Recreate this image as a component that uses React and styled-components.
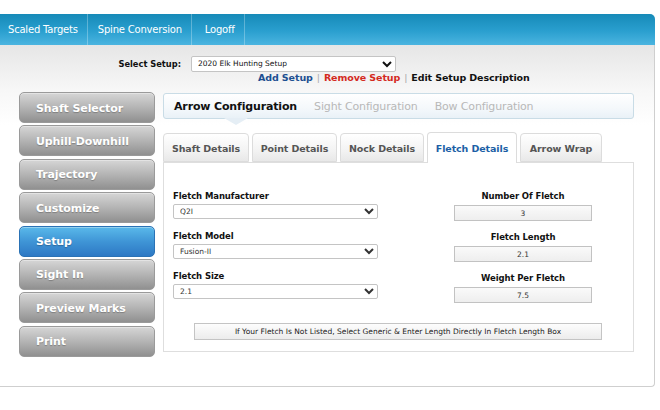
import React from "react";
import styled, { createGlobalStyle } from "styled-components";

const Global = createGlobalStyle`
  html, body { margin: 0; padding: 0; background: #fff; }
  body { font-family: "DejaVu Sans", Verdana, sans-serif; }
  #root { width: 660px; height: 410px; overflow: hidden; }
`;

const Page = styled.div`
  padding-top: 14px;
  width: 655px;
`;

const Header = styled.div`
  height: 31px;
  display: flex;
  align-items: stretch;
  background: linear-gradient(#168ab8, #2a9fcf 55%, #4bb4e0);
  border-top-right-radius: 5px;
`;

const NavItem = styled.div`
  display: flex;
  align-items: center;
  padding: 0 ${p => p.$pr}px 0 ${p => p.$pl}px;
  color: #fff;
  font-size: 10px;
  border-right: 1px solid rgba(255, 255, 255, 0.28);
  letter-spacing: -0.2px;
`;

const Body = styled.div`
  height: 341px;
  background: linear-gradient(#e6e6e6, #f7f7f7 45px, #fff 80px);
  border-right: 1px solid #cfcfcf;
  border-bottom: 1px solid #cfcfcf;
  border-bottom-right-radius: 4px;
  display: flex;
  flex-direction: column;
`;

const SetupRow = styled.div`
  display: flex;
  align-items: center;
  height: 15px;
  margin-top: 11px;
`;

const SetupLabel = styled.div`
  font-size: 8.3px;
  font-weight: bold;
  color: #111;
  padding-right: 10px;
  box-sizing: border-box;
  width: 191px;
  text-align: right;
`;

const SetupSelect = styled.select`
  width: 205px;
  height: 16px;
  font-family: "DejaVu Sans", Verdana, sans-serif;
  font-size: 7.5px;
  color: #111;
  border: 1px solid #c4c4c4;
  border-radius: 2px;
  background: #fff;
  padding: 0 2px;
`;

const LinksRow = styled.div`
  display: flex;
  align-items: center;
  height: 12px;
  padding-left: 258px;
  font-size: 9.5px;
  font-weight: bold;
  letter-spacing: -0.1px;
`;

const Link = styled.span`
  color: ${p => p.$color};
`;

const Pipe = styled.span`
  color: #aaa;
  font-weight: normal;
  margin: 0 4px;
`;

const Main = styled.div`
  display: flex;
  margin-top: 9px;
  padding-left: 19px;
`;

const Sidebar = styled.div`
  width: 136px;
  display: flex;
  flex-direction: column;
  gap: 2.4px;
`;

const SideButton = styled.div`
  height: 31px;
  box-sizing: border-box;
  border-radius: 5px;
  display: flex;
  align-items: center;
  padding: 1px 0 0 16px;
  font-size: 11px;
  font-weight: bold;
  color: #fff;
  text-shadow: 0 1px 1px rgba(0, 0, 0, 0.25);
  letter-spacing: -0.1px;
  background: ${p =>
    p.$active
      ? "linear-gradient(#5ab9ea, #3f95d6 50%, #2d78c4)"
      : "linear-gradient(#d6d6d6, #b4b4b4 50%, #909090)"};
  border: 1px solid ${p => (p.$active ? "#2a72b5" : "#9a9a9a")};
  box-shadow: inset 0 1px 0 rgba(255, 255, 255, 0.35);
`;

const Content = styled.div`
  margin-left: 8px;
  width: 471px;
  display: flex;
  flex-direction: column;
`;

const ConfigBar = styled.div`
  position: relative;
  height: 26px;
  box-sizing: border-box;
  margin-top: 1px;
  border: 1px solid #c9dce6;
  border-radius: 3px;
  background: linear-gradient(#ffffff, #f4f8fb 60%, #e9f1f7);
  display: flex;
  align-items: center;
  padding-left: 10px;
  gap: 17px;
  font-size: 11px;
`;

const ConfigTab = styled.div`
  color: ${p => (p.$active ? "#111" : "#b8b8b8")};
  font-weight: ${p => (p.$active ? "bold" : "normal")};
  letter-spacing: -0.15px;
`;

const Pointer = styled.div`
  position: absolute;
  left: 60px;
  bottom: -7px;
  width: 0;
  height: 0;
  border-left: 12px solid transparent;
  border-right: 12px solid transparent;
  border-top: 7px solid #e5eef5;
`;

const SubTabs = styled.div`
  display: flex;
  align-items: flex-end;
  gap: 3px;
  margin-top: 13px;
  height: 30px;
`;

const SubTab = styled.div`
  width: ${p => p.$w}px;
  height: ${p => (p.$active ? 31 : 29)}px;
  box-sizing: border-box;
  display: flex;
  align-items: center;
  justify-content: center;
  padding-top: ${p => (p.$active ? 0 : 2)}px;
  border: 1px solid #dcdcdc;
  border-bottom: ${p => (p.$active ? "none" : "1px solid #dcdcdc")};
  border-radius: 4px 4px 0 0;
  background: ${p =>
    p.$active ? "#fff" : "linear-gradient(#ffffff, #f3f3f3 60%, #e8e8e8)"};
  color: ${p => (p.$active ? "#1c5fa6" : "#555")};
  font-size: 9.5px;
  font-weight: bold;
  letter-spacing: -0.1px;
  position: relative;
  margin-bottom: ${p => (p.$active ? -1 : 0)}px;
  z-index: 1;
`;

const Panel = styled.div`
  height: 190px;
  box-sizing: border-box;
  border: 1px solid #dedede;
  background: #fff;
  padding: 28px 0 0 9px;
  display: flex;
  flex-direction: column;
`;

const Columns = styled.div`
  display: flex;
`;

const LeftCol = styled.div`
  width: 205px;
  display: flex;
  flex-direction: column;
  gap: 12px;
`;

const RightCol = styled.div`
  margin-left: 76px;
  width: 138px;
  display: flex;
  flex-direction: column;
  gap: 11px;
`;

const Field = styled.div`
  display: flex;
  flex-direction: column;
  gap: ${p => (p.$center ? 3 : 2)}px;
  align-items: ${p => (p.$center ? "center" : "stretch")};
`;

const Label = styled.div`
  font-size: 8.5px;
  font-weight: bold;
  color: #111;
  height: 11px;
  letter-spacing: -0.1px;
`;

const Select = styled.select`
  width: 205px;
  height: 15px;
  font-family: "DejaVu Sans", Verdana, sans-serif;
  font-size: 7.5px;
  color: #333;
  border: 1px solid #c4c4c4;
  border-radius: 2px;
  background: #fff;
  padding: 0 2px;
`;

const ValueBox = styled.input`
  width: 138px;
  height: 16px;
  box-sizing: border-box;
  border: 1px solid #c2c2c2;
  background: linear-gradient(#fafafa, #eeeeee);
  text-align: center;
  font-family: "DejaVu Sans", Verdana, sans-serif;
  font-size: 7.5px;
  color: #333;
  padding: 0;
`;

const NoteButton = styled.div`
  margin: 20px 0 0 21px;
  width: 408px;
  height: 17px;
  box-sizing: border-box;
  border: 1px solid #c4c4c4;
  background: linear-gradient(#fdfdfd, #ececec);
  display: flex;
  align-items: center;
  justify-content: center;
  font-size: 7.5px;
  color: #222;
`;

const navItems = [
  { label: "Scaled Targets", pl: 8, pr: 9 },
  { label: "Spine Conversion", pl: 10, pr: 9 },
  { label: "Logoff", pl: 13, pr: 9 },
];

const sideItems = [
  "Shaft Selector",
  "Uphill-Downhill",
  "Trajectory",
  "Customize",
  "Setup",
  "Sight In",
  "Preview Marks",
  "Print",
];

const subTabs = [
  { label: "Shaft Details", w: 86 },
  { label: "Point Details", w: 85 },
  { label: "Nock Details", w: 84 },
  { label: "Fletch Details", w: 90, active: true },
  { label: "Arrow Wrap", w: 82 },
];

export default function App() {
  return (
    <>
      <Global />
      <Page>
        <Header>
          {navItems.map(n => (
            <NavItem key={n.label} $pl={n.pl} $pr={n.pr}>
              {n.label}
            </NavItem>
          ))}
        </Header>
        <Body>
          <SetupRow>
            <SetupLabel>Select Setup:</SetupLabel>
            <SetupSelect defaultValue="elk">
              <option value="elk">2020 Elk Hunting Setup</option>
            </SetupSelect>
          </SetupRow>
          <LinksRow>
            <Link $color="#1d4f91">Add Setup</Link>
            <Pipe>|</Pipe>
            <Link $color="#d42a1e">Remove Setup</Link>
            <Pipe>|</Pipe>
            <Link $color="#111">Edit Setup Description</Link>
          </LinksRow>
          <Main>
            <Sidebar>
              {sideItems.map(s => (
                <SideButton key={s} $active={s === "Setup"}>
                  {s}
                </SideButton>
              ))}
            </Sidebar>
            <Content>
              <ConfigBar>
                <ConfigTab $active>Arrow Configuration</ConfigTab>
                <ConfigTab>Sight Configuration</ConfigTab>
                <ConfigTab>Bow Configuration</ConfigTab>
                <Pointer />
              </ConfigBar>
              <SubTabs>
                {subTabs.map(t => (
                  <SubTab key={t.label} $w={t.w} $active={t.active}>
                    {t.label}
                  </SubTab>
                ))}
              </SubTabs>
              <Panel>
                <Columns>
                  <LeftCol>
                    <Field>
                      <Label>Fletch Manufacturer</Label>
                      <Select defaultValue="q2i">
                        <option value="q2i">Q2I</option>
                      </Select>
                    </Field>
                    <Field>
                      <Label>Fletch Model</Label>
                      <Select defaultValue="f">
                        <option value="f">Fusion-II</option>
                      </Select>
                    </Field>
                    <Field>
                      <Label>Fletch Size</Label>
                      <Select defaultValue="s">
                        <option value="s">2.1</option>
                      </Select>
                    </Field>
                  </LeftCol>
                  <RightCol>
                    <Field $center>
                      <Label>Number Of Fletch</Label>
                      <ValueBox readOnly value="3" />
                    </Field>
                    <Field $center>
                      <Label>Fletch Length</Label>
                      <ValueBox readOnly value="2.1" />
                    </Field>
                    <Field $center>
                      <Label>Weight Per Fletch</Label>
                      <ValueBox readOnly value="7.5" />
                    </Field>
                  </RightCol>
                </Columns>
                <NoteButton>
                  If Your Fletch Is Not Listed, Select Generic &amp; Enter Length Directly In Fletch Length Box
                </NoteButton>
              </Panel>
            </Content>
          </Main>
        </Body>
      </Page>
    </>
  );
}
